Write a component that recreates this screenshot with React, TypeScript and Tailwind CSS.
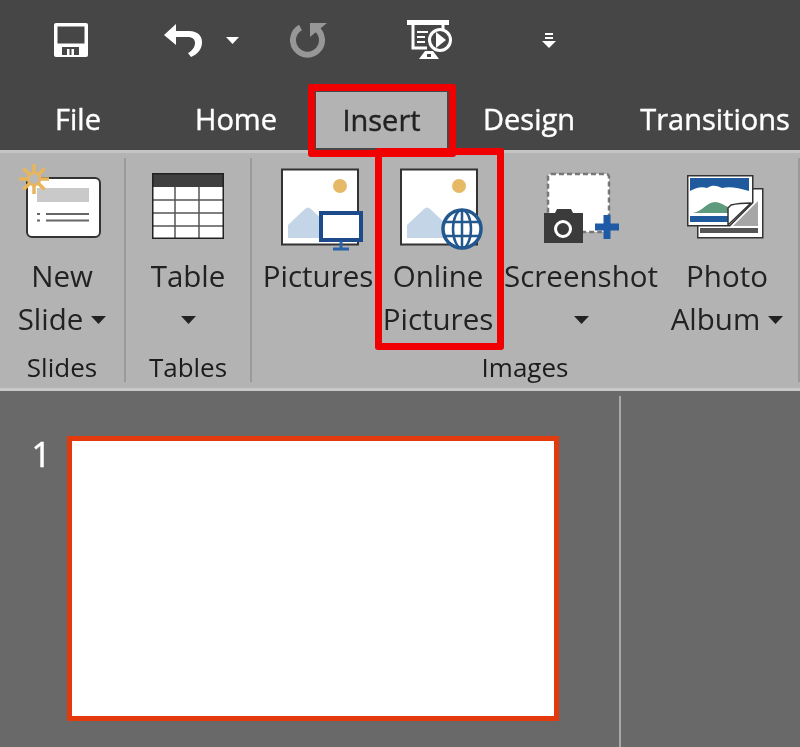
import type { ReactNode } from 'react'

const Caret = ({ className = '' }: { className?: string }) => (
  <svg width="15" height="8" viewBox="0 0 15 8" className={className}>
    <path d="M0 0h15L7.500 8z" fill="#222" />
  </svg>
)

function SaveIcon() {
  return (
    <svg width="34" height="34" viewBox="0 0 34 34">
      <rect width="34" height="34" rx="2" fill="#fff" />
      <rect x="3.500" y="3.500" width="27" height="17" fill="#464646" />
      <rect x="8" y="24" width="17" height="8" fill="#464646" />
      <rect x="13" y="26" width="7" height="6" fill="#fff" />
      <rect x="15.500" y="26" width="2" height="6" fill="#464646" />
    </svg>
  )
}

function UndoIcon() {
  return (
    <svg width="39" height="33" viewBox="0 0 39 33">
      <path d="M0 11 12 0v7h13c9 0 13 5 13 11 0 7-4 12-11 15l-3-4c4-2 7-6 7-10 0-4-3-6-7-6H12v8z" fill="#fff" />
    </svg>
  )
}

function RedoIcon() {
  return (
    <svg width="37" height="36" viewBox="0 0 37 36">
      <path d="M10.500 5.500a14.500 14.500 0 1 0 14 0" fill="none" stroke="#979797" strokeWidth="6" />
      <path d="M20 1h17L20 15z" fill="#979797" />
    </svg>
  )
}

function PresentIcon() {
  return (
    <svg width="45" height="40" viewBox="0 0 45 40">
      <rect x="0" y="0" width="42" height="5" fill="#fff" />
      <path d="M6 5v23h14" fill="none" stroke="#fff" strokeWidth="3" />
      <path d="M36 5v6" fill="none" stroke="#fff" strokeWidth="3" />
      <path d="M10 12h11M10 17h8M10 22h8" stroke="#fff" strokeWidth="2" />
      <circle cx="33" cy="20" r="10.500" fill="none" stroke="#fff" strokeWidth="3" />
      <path d="M29 12v16l10-8z" fill="#fff" />
      <path d="M12 39l6-8h8l6 8z" fill="#fff" />
      <path d="M20 34h4v3h-4z" fill="#464646" />
    </svg>
  )
}

function NewSlideIcon() {
  return (
    <svg width="124" height="100" viewBox="0 153 124 100">
      <rect x="27" y="178" width="73" height="59" rx="5" fill="#fff" stroke="#333" strokeWidth="2" />
      <rect x="37" y="188" width="52" height="14" fill="#c9c9c9" />
      <path d="M46 214h43M46 220.500h43" stroke="#666" strokeWidth="2" />
      <path d="M37 214h3M37 220.500h3" stroke="#666" strokeWidth="2" />
      <g stroke="#e8b55c" strokeWidth="3.500">
        <path d="M34 164v30M19 179h30M23.500 168.500l21 21M44.500 168.500l-21 21" />
      </g>
      <circle cx="34" cy="179" r="6" fill="#b9b9b9" stroke="#e8b55c" strokeWidth="2.500" />
    </svg>
  )
}

function TableIcon() {
  return (
    <svg width="124" height="100" viewBox="126 153 124 100">
      <rect x="152" y="173" width="72" height="66" fill="#fff" />
      <rect x="152" y="173" width="72" height="14" fill="#3f3f3f" />
      <path d="M152 200h72M152 213h72M152 226h72M175 187v52M199 187v52" stroke="#555" strokeWidth="1.500" />
      <rect x="152.750" y="173.750" width="70.500" height="64.500" fill="none" stroke="#222" strokeWidth="1.500" />
    </svg>
  )
}

// framed landscape shared by the two picture buttons
function PictureFrame({ x }: { x: number }) {
  return (
    <>
      <rect x={x} y="169.500" width="76" height="75" fill="#fff" stroke="#333" strokeWidth="2" />
      <circle cx={x + 58} cy="186" r="7" fill="#e5b966" />
      <path d={`M${x + 6} 238v-13l17-16c2-2 4-2 6 0l16 15v14z`} fill="#c5d5e8" />
    </>
  )
}

function PicturesIcon() {
  return (
    <svg width="120" height="100" viewBox="258 153 120 100">
      <PictureFrame x={282} />
      <rect x="321" y="213" width="40" height="27" fill="#fff" stroke="#1c4a8a" strokeWidth="4" />
      <path d="M341 241v7M333 249h16" stroke="#2b62a8" strokeWidth="3" />
    </svg>
  )
}

function OnlinePicturesIcon() {
  return (
    <svg width="120" height="100" viewBox="378 153 120 100">
      <PictureFrame x={401} />
      <circle cx="462" cy="229" r="19" fill="#fff" stroke="#23588f" strokeWidth="3.500" />
      <ellipse cx="462" cy="229" rx="9" ry="19" fill="none" stroke="#23588f" strokeWidth="2.500" />
      <path d="M462 210v38M444 222h36M444 236h36" stroke="#23588f" strokeWidth="2.500" />
    </svg>
  )
}

function ScreenshotIcon() {
  return (
    <svg width="166" height="100" viewBox="498 153 166 100">
      <rect x="548" y="174" width="61" height="58" rx="3" fill="#fff" stroke="#777" strokeWidth="2.500" strokeDasharray="5 3" />
      <path d="M544 213h11l2-4h14l2 4h10v30h-39z" fill="#3b3b3b" />
      <circle cx="563" cy="229" r="7.500" fill="none" stroke="#fff" strokeWidth="3" />
      <path d="M607 215v24M595 227h24" stroke="#1f5aa6" strokeWidth="7" />
    </svg>
  )
}

function PhotoAlbumIcon() {
  return (
    <svg width="126" height="100" viewBox="664 153 126 100">
      <rect x="697.750" y="188.750" width="65" height="49" fill="#fff" stroke="#333" strokeWidth="1.500" />
      <rect x="700" y="228" width="58" height="5" fill="#555" />
      <path d="M733 226l25-25v25z" fill="#a6a6a6" />
      <path d="M687.750 175.750h65v27l-23 23h-42z" fill="#fff" stroke="#333" strokeWidth="1.500" />
      <rect x="690" y="178" width="59" height="15" fill="#1f5a9c" />
      <path d="M690 191c6-3 11-5 17-3 6-4 11-2 15 0 8-2 16 0 27 3v3H690z" fill="#fff" />
      <path d="M693 213c10-2 14-11 22-11 4 0 9 3 13 5v6z" fill="#5e9a7e" />
      <rect x="690" y="216" width="38" height="6" fill="#1f5a9c" />
      <path d="M751 203c-8 0-16 1-20 2l-3 3v17z" fill="#fff" stroke="#333" strokeWidth="1.500" strokeLinejoin="round" />
    </svg>
  )
}

function RibbonButton({ width, icon, lines }: { width: string; icon: ReactNode; lines: ReactNode[] }) {
  return (
    <div className={`${width} flex flex-col items-center shrink-0`}>
      <div className="h-[102px]">{icon}</div>
      {lines.map((line, i) => (
        <div key={i} className="h-[43px] flex items-center justify-center gap-[8px] whitespace-nowrap">
          {line}
        </div>
      ))}
    </div>
  )
}

function Group({ label, width, children }: { label: string; width: string; children: ReactNode }) {
  return (
    <div className={`${width} flex flex-col shrink-0`}>
      <div className="flex h-[195px]">{children}</div>
      <div className="h-[38px] flex items-center justify-center text-[26px] text-[#1c1c1c]">{label}</div>
    </div>
  )
}

const Divider = () => <div className="w-[2px] shrink-0 mt-[5px] mb-[6px] bg-[#9a9a9a]" />

export default function App() {
  const tabs = [
    { label: 'File', width: 'w-[156px]' },
    { label: 'Home', width: 'w-[160px]' },
    { label: 'Insert', width: 'w-[131px]' },
    { label: 'Design', width: 'w-[164px]' },
    { label: 'Transitions', width: 'w-[208px]' },
  ]

  return (
    <div className="w-[800px] h-[747px] overflow-hidden relative bg-[#696969] blur-[0.5px] font-['Open_Sans','Liberation_Sans',sans-serif]">
      <header className="bg-[#464646] h-[150px]">
        <div className="h-[80px] flex items-center pl-[54px]">
          <SaveIcon />
          <div className="ml-[76px]"><UndoIcon /></div>
          <svg width="13" height="7" viewBox="0 0 13 7" className="ml-[23px]"><path d="M0 0h13L6.500 7z" fill="#fff" /></svg>
          <div className="ml-[51px]"><RedoIcon /></div>
          <div className="ml-[80px]"><PresentIcon /></div>
          <svg width="14" height="15" viewBox="0 0 14 15" className="ml-[90px]">
            <path d="M3 1h8M3 5h8" stroke="#fff" strokeWidth="2" />
            <path d="M0 8h14l-7 7z" fill="#fff" />
          </svg>
        </div>
        <nav className="flex h-[70px] pt-[11px] overflow-hidden">
          {tabs.map(tab => (
            <div
              key={tab.label}
              className={`${tab.width} shrink-0 h-[56px] flex items-center justify-center text-[29px] [-webkit-text-stroke:0.4px] ${tab.label === 'Insert' ? 'mt-[1px] bg-[#b3b3b3] text-[#222]' : 'text-white'}`}
            >
              {tab.label}
            </div>
          ))}
        </nav>
      </header>

      <section className="h-[241px] bg-[#b3b3b3] border-t-[3px] border-[#c4c4c4] border-b-[3px] border-b-[#c9c9c9] flex text-[29.5px] text-[#222]">
        <Group label="Slides" width="w-[124px]">
          <RibbonButton
            width="w-[124px]"
            icon={<NewSlideIcon />}
            lines={['New', <><span>Slide</span><Caret /></>]}
          />
        </Group>
        <Divider />
        <Group label="Tables" width="w-[124px]">
          <RibbonButton width="w-[124px]" icon={<TableIcon />} lines={['Table', <Caret />]} />
        </Group>
        <Divider />
        <Group label="Images" width="w-[546px]">
          <div className="w-[6px] shrink-0" />
          <RibbonButton width="w-[120px]" icon={<PicturesIcon />} lines={['Pictures']} />
          <RibbonButton width="w-[120px]" icon={<OnlinePicturesIcon />} lines={['Online', 'Pictures']} />
          <RibbonButton width="w-[166px]" icon={<ScreenshotIcon />} lines={['Screenshot', <Caret />]} />
          <RibbonButton
            width="w-[126px]"
            icon={<PhotoAlbumIcon />}
            lines={['Photo', <><span>Album</span><Caret /></>]}
          />
        </Group>
        <Divider />
      </section>

      <main className="flex h-[356px]">
        <div className="w-[619px] shrink-0 flex pt-[45px]">
          <div className="w-[67px] text-right pr-[16px] text-[34px] leading-[36px] [-webkit-text-stroke:0.5px] text-white">1</div>
          <div className="w-[492px] h-[285px] bg-white border-[5px] border-[#e2390d]" />
        </div>
        <div className="w-[2px] mt-[5px] bg-[#a8a8a8]" />
      </main>

      {/* red callouts drawn over the screenshot */}
      <div className="absolute left-[308px] top-[84px] w-[148px] h-[73px] border-[7px] border-[#f00000] rounded-[3px]" />
      <div className="absolute left-[375px] top-[148px] w-[129px] h-[202px] border-[7px] border-[#f00000] rounded-[3px]" />
    </div>
  )
}
